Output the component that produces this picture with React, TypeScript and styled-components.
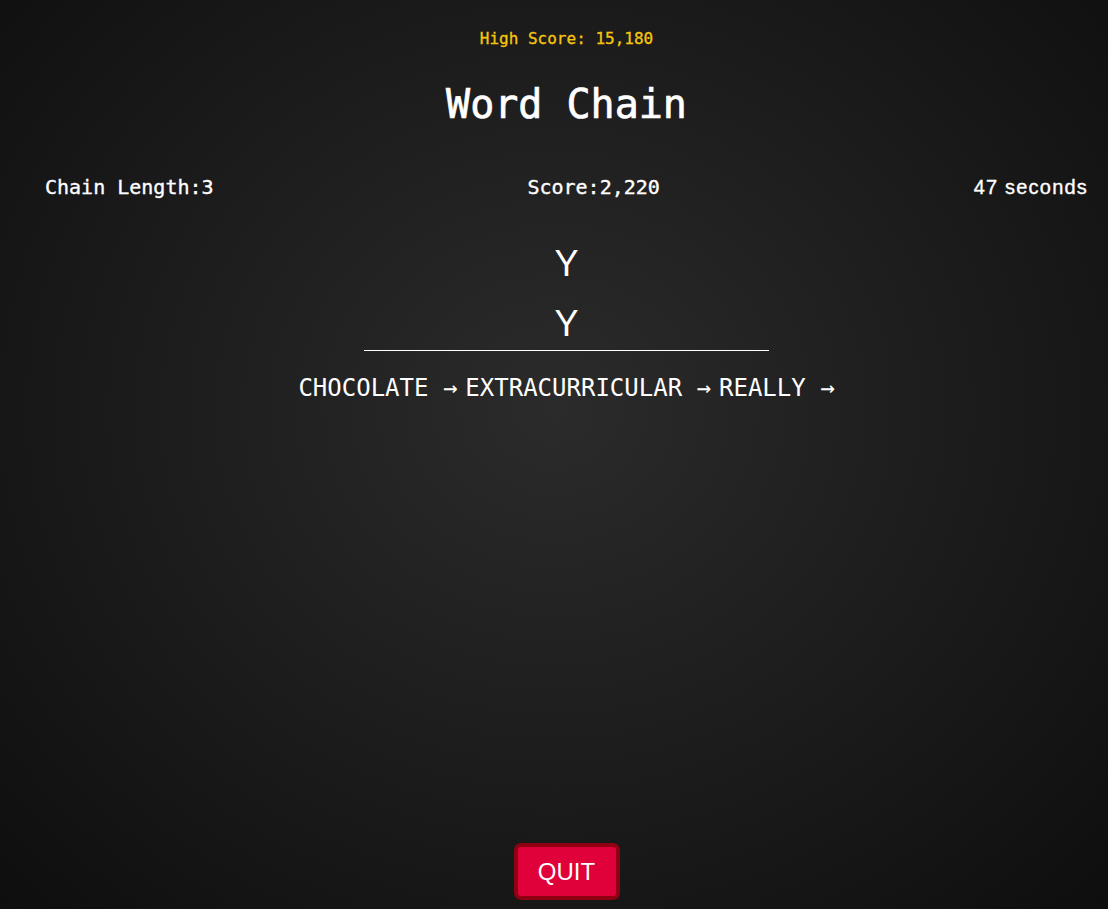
import React from "react";
import styled, { createGlobalStyle } from "styled-components";

const GlobalStyle = createGlobalStyle`
  html, body {
    margin: 0;
    padding: 0;
    height: 100%;
  }
  body {
    background: radial-gradient(ellipse at 50% 45%, #2b2b2b 0%, #1e1e1e 45%, #0e0e0e 100%);
    color: #ffffff;
    font-family: "DejaVu Sans Mono", "Liberation Mono", monospace;
  }
  #root {
    min-height: 100vh;
  }
`;

const Page = styled.div`
  box-sizing: border-box;
  min-height: 100vh;
  display: flex;
  flex-direction: column;
  align-items: center;
  padding-left: 25px;
`;

const HighScore = styled.div`
  margin-top: 29px;
  font-size: 16px;
  line-height: 20px;
  color: #f6c60f;
  -webkit-text-stroke: 0.3px #f6c60f;
`;

const Title = styled.h1`
  margin: 31px 0 0;
  font-size: 40px;
  line-height: 48px;
  font-weight: 500;
  -webkit-text-stroke: 0.7px #ffffff;
`;

const StatsRow = styled.div`
  box-sizing: border-box;
  width: 100%;
  display: flex;
  justify-content: space-between;
  align-items: center;
  padding: 0 20px;
  margin-top: 47px;
  font-size: 20px;
  line-height: 24px;
  -webkit-text-stroke: 0.35px #ffffff;
`;

const Stat = styled.div``;

const Timer = styled.div`
  font-family: "Liberation Sans", Arial, sans-serif;
  letter-spacing: 1.2px;
`;

const CurrentLetter = styled.div`
  margin-top: 44px;
  font-family: "Liberation Sans", Arial, sans-serif;
  font-size: 36px;
  line-height: 42px;
`;

const WordInput = styled.input`
  box-sizing: border-box;
  margin-top: 16px;
  width: 405px;
  height: 50px;
  background: transparent;
  border: none;
  border-bottom: 1px solid #ffffff;
  outline: none;
  color: #ffffff;
  text-align: center;
  font-family: "Liberation Sans", Arial, sans-serif;
  font-size: 36px;
  padding: 0 0 4px;
`;

const ChainList = styled.div`
  margin-top: 22px;
  display: flex;
  gap: 8px;
  font-size: 24px;
  line-height: 30px;
`;

const ChainItem = styled.span`
  white-space: pre;
`;

const Spacer = styled.div`
  flex: 1;
`;

const QuitButton = styled.button`
  margin-bottom: 9px;
  box-sizing: border-box;
  width: 106px;
  height: 57px;
  background: #e0003a;
  border: 4px solid #8e0012;
  border-radius: 7px;
  color: #ffffff;
  font-family: "Liberation Sans", Arial, sans-serif;
  font-size: 24px;
  cursor: pointer;
`;

const chain = ["CHOCOLATE", "EXTRACURRICULAR", "REALLY"];

export default function App() {
  return (
    <>
      <GlobalStyle />
      <Page>
        <HighScore>High Score: 15,180</HighScore>
        <Title>Word Chain</Title>
        <StatsRow>
          <Stat>Chain Length:3</Stat>
          <Stat>Score:2,220</Stat>
          <Timer>47 seconds</Timer>
        </StatsRow>
        <CurrentLetter>Y</CurrentLetter>
        <WordInput defaultValue="Y" />
        <ChainList>
          {chain.map((w) => (
            <ChainItem key={w}>{w} →</ChainItem>
          ))}
        </ChainList>
        <Spacer />
        <QuitButton>QUIT</QuitButton>
      </Page>
    </>
  );
}
